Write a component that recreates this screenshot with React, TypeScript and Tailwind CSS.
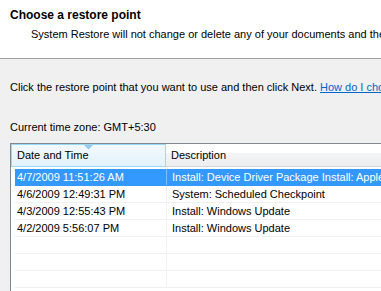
const rows = [
  { date: '4/7/2009 11:51:26 AM', desc: 'Install: Device Driver Package Install: Apple Inc. Image' },
  { date: '4/6/2009 12:49:31 PM', desc: 'System: Scheduled Checkpoint' },
  { date: '4/3/2009 12:55:43 PM', desc: 'Install: Windows Update' },
  { date: '4/2/2009 5:56:07 PM', desc: 'Install: Windows Update' },
  { date: '', desc: '' },
  { date: '', desc: '' },
  { date: '', desc: '' },
];

export default function App() {
  return (
    <div
      className="w-[381px] h-[291px] overflow-hidden bg-[#f0f0f0] text-[11px] text-black"
      style={{ fontFamily: '"Liberation Sans", Arial, sans-serif' }}
    >
      {/* wizard header */}
      <div className="h-[59px] bg-white border-b border-[#a0a0a0] pt-[8px] pl-[10px]">
        <div className="font-bold text-[12px] leading-[14px] whitespace-nowrap">Choose a restore point</div>
        <div className="pl-[21px] mt-[5px] leading-[14px] whitespace-nowrap">
          System Restore will not change or delete any of your documents and the process is reversible.
        </div>
      </div>

      <div className="pl-[10px] pt-[21px] whitespace-nowrap leading-[14px]">
        Click the restore point that you want to use and then click Next.{' '}
        <span className="text-[#0066cc] underline">How do I choose a restore point?</span>
      </div>

      <div className="pl-[10px] pt-[26px] whitespace-nowrap leading-[14px]">Current time zone: GMT+5:30</div>

      {/* list view */}
      <div className="ml-[10px] mt-[9px] w-[400px] h-[200px] border border-[#828790] bg-white">
        <div className="flex h-[23px]">
          <div className="relative shrink-0 w-[155px] h-full border border-[#96d9f9] bg-gradient-to-b from-[#f2f9fd] to-[#e3f2fc] pl-[5px] flex items-center">
            <svg className="absolute left-[72px] top-0" width="9" height="5" viewBox="0 0 9 5">
              <path d="M0 0h9L4.5 4.5z" fill="#97c8e8" />
            </svg>
            <span className="whitespace-nowrap">Date and Time</span>
          </div>
          <div className="flex-1 h-full bg-[linear-gradient(to_bottom,#ffffff_0%,#ffffff_40%,#f3f4f6_41%,#eceef0_100%)] border-b border-[#d5d5d5] pl-[5px] flex items-center">
            <span className="whitespace-nowrap">Description</span>
          </div>
        </div>
        <div className="pl-[4px] pt-[2px]">
          {rows.map((r, i) => (
            <div
              key={i}
              className={`flex h-[17px] leading-[17px] border-b ${
                i === 0 ? 'bg-[#3399ff] text-white border-[#3399ff]' : 'border-[#f0f0f0]'
              }`}
            >
              <div className="shrink-0 w-[151px] pl-[2px] whitespace-nowrap">{r.date}</div>
              <div
                className={`flex-1 min-w-0 pl-[5px] whitespace-nowrap border-l ${
                  i === 0 ? 'border-[#7fbfff]' : 'border-[#f0f0f0]'
                }`}
              >
                {r.desc}
              </div>
            </div>
          ))}
        </div>
      </div>
    </div>
  );
}
